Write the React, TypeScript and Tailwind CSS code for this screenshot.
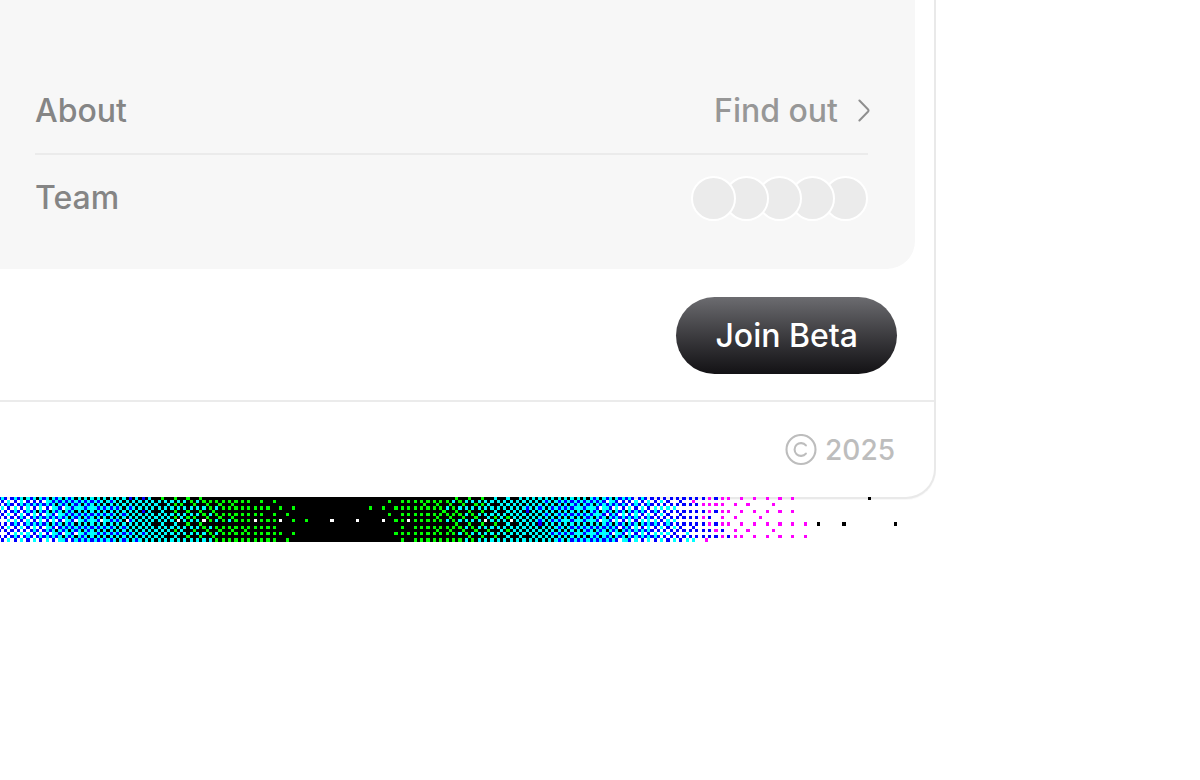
// Leftmost member sits on top of the stack
const TEAM = [
  { name: "Design",      layer: "z-50" },
  { name: "Engineering", layer: "z-40" },
  { name: "Product",     layer: "z-30" },
  { name: "Research",    layer: "z-20" },
  { name: "Support",     layer: "z-10" },
];

// 8x8 Bayer matrix used for the strip under the card
const BAYER = [
  [0, 32, 8, 40, 2, 34, 10, 42],
  [48, 16, 56, 24, 50, 18, 58, 26],
  [12, 44, 4, 36, 14, 46, 6, 38],
  [60, 28, 52, 20, 62, 30, 54, 22],
  [3, 35, 11, 43, 1, 33, 9, 41],
  [51, 19, 59, 27, 49, 17, 57, 25],
  [15, 47, 7, 39, 13, 45, 5, 37],
  [63, 31, 55, 23, 61, 29, 53, 21],
];

const CELL = 3.2;
const ROWS = 14;
const COLS = 283;
const CENTER = 335;

// [distance from the dark centre, threshold below which the channel is off]
const RED = [[0, 64], [258, 63], [285, 52], [325, 35], [345, 24], [358, 16], [368, 12], [375, 8], [383, 4], [395, 0]];
const GREEN = [[0, 64], [28, 63], [38, 61], [50, 58], [62, 52], [80, 47], [95, 44], [150, 38], [205, 32], [245, 28], [300, 24], [373, 16], [400, 8], [430, 5], [455, 4], [461, 3.1], [468, 2.1], [472, 1], [476, 0]];
const BLUE = [[0, 64], [105, 63], [140, 50], [180, 35], [195, 30], [225, 18], [255, 10], [305, 0]];

// Stray cells that fall outside the ramps, as "col:row"
const WHITE_DOTS = [32, 40, 56, 64, 80, 88, 104, 112, 120, 128, 152, 160].map((c) => `${c}:7`);
const BLACK_DOTS = ["256:8", "264:8", "280:8", "272:0"];

function level(ramp: number[][], d: number) {
  for (let i = 1; i < ramp.length; i++) {
    const [x0, y0] = ramp[i - 1];
    const [x1, y1] = ramp[i];
    if (d <= x1) return y0 + ((y1 - y0) * (d - x0)) / (x1 - x0);
  }
  return 0;
}

function buildStrip() {
  const paths: Record<string, string> = {};
  const add = (color: string, col: number, row: number) => {
    paths[color] = (paths[color] ?? "") + `M${col} ${row}h1v1h-1z`;
  };

  for (let row = 0; row < ROWS; row++) {
    for (let col = 0; col < COLS; col++) {
      const key = `${col}:${row}`;
      const v = BAYER[row % 8][col % 8];
      const d = Math.abs(col * CELL - 1 - 1.3 * (row - 6) - CENTER);
      const on = (ramp: number[][]) => (v >= level(ramp, d) ? "f" : "0");
      const color = `#${on(RED)}${on(GREEN)}${on(BLUE)}`;

      if (WHITE_DOTS.includes(key)) add("#ffffff", col, row);
      else if (BLACK_DOTS.includes(key)) add("#000", col, row);
      // white stays transparent so the card edge shows through
      else if (color !== "#fff") add(color, col, row);
    }
  }
  return Object.entries(paths);
}

const STRIP = buildStrip();

function DitherStrip() {
  return (
    <svg aria-hidden="true" shapeRendering="crispEdges" className="relative -mt-0.5 block h-[46px] w-full">
      <g transform="translate(-2.5 -0.2) scale(3.2)">
        {STRIP.map(([color, d]) => (
          <path key={color} d={d} fill={color} />
        ))}
      </g>
    </svg>
  );
}

function Chevron() {
  return (
    <svg viewBox="0 0 12 24" className="h-6 w-3" fill="none" stroke="#8f8f8f" strokeWidth="2" strokeLinecap="round" strokeLinejoin="round">
      <path d="M1.4 1.5 9.9 10.2q1.2 1.3 0 2.6L1.4 21.5" />
    </svg>
  );
}

function CopyrightIcon() {
  return (
    <svg viewBox="0 0 32 32" className="size-8" fill="none" stroke="#bdbdbd" strokeWidth="2.1" strokeLinecap="round">
      <circle cx="16" cy="15.5" r="14.5" />
      <path d="M20.9 11.4A6.4 6.4 0 1 0 20.9 19.6" />
    </svg>
  );
}

export default function App() {
  return (
    <main className="min-h-screen overflow-hidden bg-white font-['Inter',sans-serif]">
      <section className="mr-[264px] overflow-hidden rounded-br-[30px] border-r-2 border-b-2 border-[#e9e9e9] bg-white shadow-[0_1px_1px_#00000008]">
        <div className="mr-[19px] rounded-br-[28px] bg-[#f7f7f7] pt-[68px] pr-[47px] pb-7 pl-[35px]">
          <div className="flex h-[87px] items-center justify-between border-b-2 border-[#ebebeb] text-[32px] leading-10 font-medium">
            <span className="text-[#858585]">About</span>
            <a href="#about" className="-mr-0.5 flex items-center gap-5 text-[#979797]">
              Find out
              <Chevron />
            </a>
          </div>
          <div className="flex h-[86px] items-center justify-between text-[32px] leading-10 font-medium">
            <span className="text-[#858585]">Team</span>
            <ul className="flex">
              {TEAM.map(({ name, layer }) => (
                <li
                  key={name}
                  aria-label={name}
                  className={`relative -ml-3 size-[45px] rounded-full border-2 border-white bg-[#ebebeb] first:ml-0 ${layer}`}
                />
              ))}
            </ul>
          </div>
        </div>

        <div className="flex justify-end border-b-2 border-[#ebebeb] pt-7 pr-[37px] pb-[26px]">
          <button
            type="button"
            className="h-[77px] rounded-full bg-linear-to-b from-[#6c6c70] to-[#131215] px-[39px] text-[32px] leading-10 font-medium text-white"
          >
            Join Beta
          </button>
        </div>

        <footer className="flex h-[95px] items-center justify-end gap-2 pr-[39px] text-[28px] leading-9 font-medium text-[#bdbdbd]">
          <CopyrightIcon />
          <span>2025</span>
        </footer>
      </section>

      <DitherStrip />
    </main>
  );
}
